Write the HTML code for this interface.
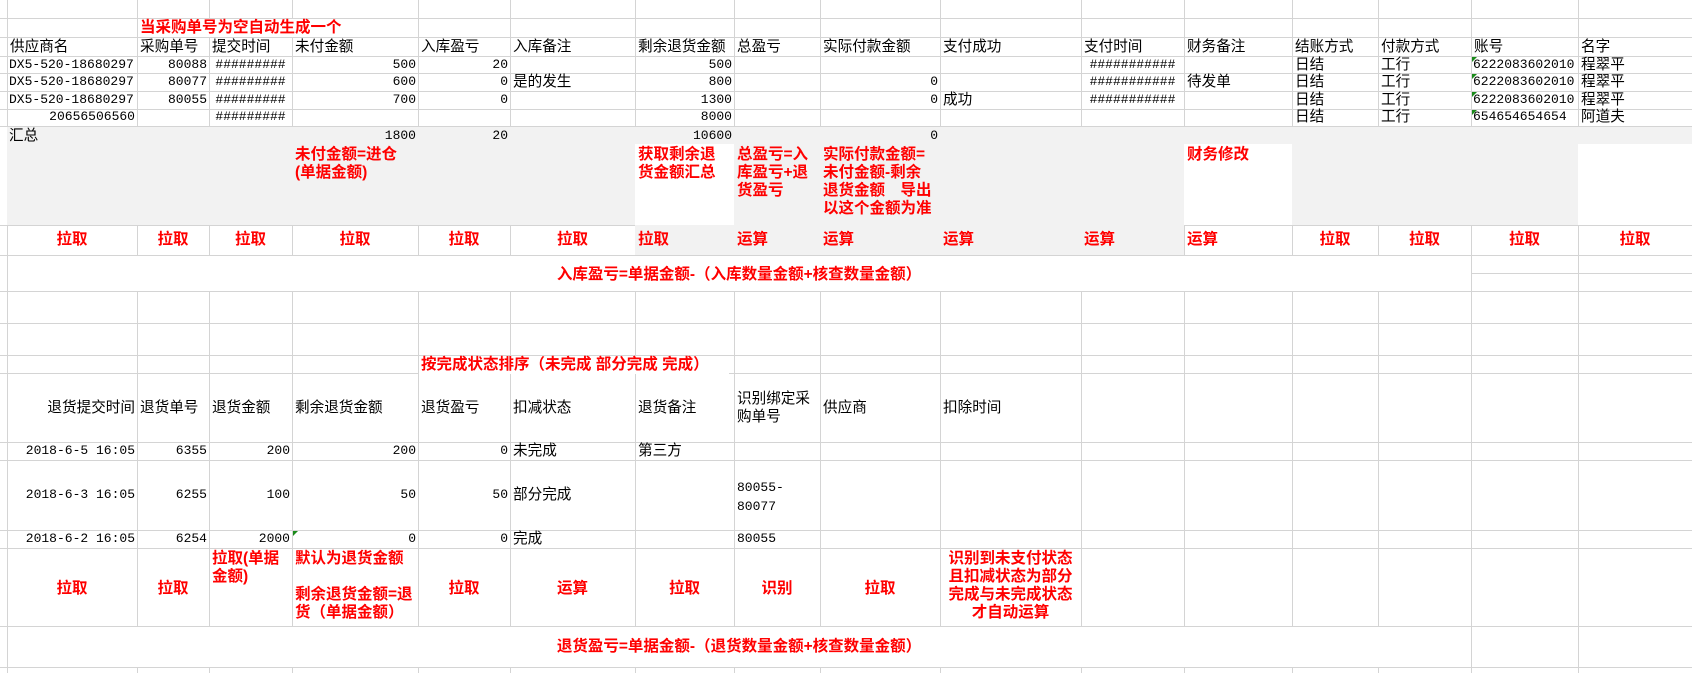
<!DOCTYPE html>
<html><head><meta charset="utf-8"><style>
body{margin:0;width:1692px;height:673px;position:relative;overflow:hidden;background:#fff;font-family:"Liberation Sans","Noto Sans CJK SC",sans-serif;color:#000}
.t{position:absolute;white-space:nowrap;font-size:14.6px;padding:0 2px;box-sizing:border-box;height:18px;line-height:18px}
.r{text-align:right}.c{text-align:center}
.m{font-family:"Liberation Mono","Noto Sans CJK SC",monospace;font-size:13px}
.red{color:#f00;font-weight:bold;font-size:15.5px;line-height:18px}
.h{position:absolute;height:1px;background:#d4d4d4}
.v{position:absolute;width:1px;background:#d4d4d4}
.g{position:absolute;background:#f2f2f2}
.w{position:absolute;background:#fff}
.tri{position:absolute;width:0;height:0;border-top:5px solid #1a8a1a;border-right:5px solid transparent}
</style></head><body>
<div class="g" style="left:7px;top:126px;width:1685px;height:99px"></div>
<div class="w" style="left:635px;top:144px;width:99px;height:81px"></div>
<div class="w" style="left:1184px;top:144px;width:108px;height:81px"></div>
<div class="w" style="left:1578px;top:144px;width:114px;height:81px"></div>
<div class="g" style="left:635px;top:225px;width:549px;height:30px"></div>

<div class="h" style="left:0;top:18px;width:1692px"></div>
<div class="h" style="left:0;top:37px;width:1692px"></div>
<div class="h" style="left:0;top:56px;width:1692px"></div>
<div class="h" style="left:0;top:73px;width:1692px"></div>
<div class="h" style="left:0;top:91px;width:1692px"></div>
<div class="h" style="left:0;top:109px;width:1692px"></div>
<div class="h" style="left:0;top:126px;width:1692px"></div>
<div class="h" style="left:0;top:225px;width:635px"></div>
<div class="h" style="left:1184px;top:225px;width:508px"></div>
<div class="h" style="left:0;top:255px;width:1692px"></div>
<div class="h" style="left:1471px;top:273px;width:221px"></div>
<div class="h" style="left:0;top:291px;width:1692px"></div>
<div class="h" style="left:0;top:323px;width:1692px"></div>
<div class="h" style="left:0;top:355px;width:1692px"></div>
<div class="h" style="left:0;top:373px;width:1692px"></div>
<div class="h" style="left:0;top:442px;width:1692px"></div>
<div class="h" style="left:0;top:460px;width:1692px"></div>
<div class="h" style="left:0;top:530px;width:1692px"></div>
<div class="h" style="left:0;top:548px;width:1692px"></div>
<div class="h" style="left:0;top:626px;width:1692px"></div>
<div class="h" style="left:0;top:667px;width:1692px"></div>

<div class="v" style="left:7px;top:0;height:126px"></div>
<div class="v" style="left:137px;top:0;height:126px"></div>
<div class="v" style="left:209px;top:0;height:126px"></div>
<div class="v" style="left:292px;top:0;height:126px"></div>
<div class="v" style="left:418px;top:0;height:126px"></div>
<div class="v" style="left:510px;top:0;height:126px"></div>
<div class="v" style="left:635px;top:0;height:126px"></div>
<div class="v" style="left:734px;top:0;height:126px"></div>
<div class="v" style="left:820px;top:0;height:126px"></div>
<div class="v" style="left:940px;top:0;height:126px"></div>
<div class="v" style="left:1081px;top:0;height:126px"></div>
<div class="v" style="left:1184px;top:0;height:126px"></div>
<div class="v" style="left:1292px;top:0;height:126px"></div>
<div class="v" style="left:1378px;top:0;height:126px"></div>
<div class="v" style="left:1471px;top:0;height:126px"></div>
<div class="v" style="left:1578px;top:0;height:126px"></div>
<div class="v" style="left:7px;top:225px;height:30px"></div>
<div class="v" style="left:137px;top:225px;height:30px"></div>
<div class="v" style="left:209px;top:225px;height:30px"></div>
<div class="v" style="left:292px;top:225px;height:30px"></div>
<div class="v" style="left:418px;top:225px;height:30px"></div>
<div class="v" style="left:510px;top:225px;height:30px"></div>
<div class="v" style="left:1184px;top:225px;height:30px"></div>
<div class="v" style="left:1292px;top:225px;height:30px"></div>
<div class="v" style="left:1378px;top:225px;height:30px"></div>
<div class="v" style="left:1471px;top:225px;height:30px"></div>
<div class="v" style="left:1578px;top:225px;height:30px"></div>
<div class="v" style="left:7px;top:255px;height:36px"></div>
<div class="v" style="left:1471px;top:255px;height:36px"></div>
<div class="v" style="left:1578px;top:255px;height:36px"></div>
<div class="v" style="left:7px;top:291px;height:335px"></div>
<div class="v" style="left:137px;top:291px;height:335px"></div>
<div class="v" style="left:209px;top:291px;height:335px"></div>
<div class="v" style="left:292px;top:291px;height:335px"></div>
<div class="v" style="left:418px;top:291px;height:335px"></div>
<div class="v" style="left:510px;top:291px;height:335px"></div>
<div class="v" style="left:635px;top:291px;height:335px"></div>
<div class="v" style="left:734px;top:291px;height:335px"></div>
<div class="v" style="left:820px;top:291px;height:335px"></div>
<div class="v" style="left:940px;top:291px;height:335px"></div>
<div class="v" style="left:1081px;top:291px;height:335px"></div>
<div class="v" style="left:1184px;top:291px;height:335px"></div>
<div class="v" style="left:1292px;top:291px;height:335px"></div>
<div class="v" style="left:1378px;top:291px;height:335px"></div>
<div class="v" style="left:1471px;top:291px;height:335px"></div>
<div class="v" style="left:1578px;top:291px;height:335px"></div>
<div class="v" style="left:7px;top:626px;height:41px"></div>
<div class="v" style="left:1471px;top:626px;height:41px"></div>
<div class="v" style="left:1578px;top:626px;height:41px"></div>
<div class="v" style="left:7px;top:667px;height:6px"></div>
<div class="v" style="left:137px;top:667px;height:6px"></div>
<div class="v" style="left:209px;top:667px;height:6px"></div>
<div class="v" style="left:292px;top:667px;height:6px"></div>
<div class="v" style="left:418px;top:667px;height:6px"></div>
<div class="v" style="left:510px;top:667px;height:6px"></div>
<div class="v" style="left:635px;top:667px;height:6px"></div>
<div class="v" style="left:734px;top:667px;height:6px"></div>
<div class="v" style="left:820px;top:667px;height:6px"></div>
<div class="v" style="left:940px;top:667px;height:6px"></div>
<div class="v" style="left:1081px;top:667px;height:6px"></div>
<div class="v" style="left:1184px;top:667px;height:6px"></div>
<div class="v" style="left:1292px;top:667px;height:6px"></div>
<div class="v" style="left:1378px;top:667px;height:6px"></div>
<div class="v" style="left:1471px;top:667px;height:6px"></div>
<div class="v" style="left:1578px;top:667px;height:6px"></div>

<div class="t red" style="left:138px;top:19px;background:#fff;width:215px">当采购单号为空自动生成一个</div>

<div class="t" style="left:8px;top:38px">供应商名</div>
<div class="t" style="left:138px;top:38px">采购单号</div>
<div class="t" style="left:210px;top:38px">提交时间</div>
<div class="t" style="left:293px;top:38px">未付金额</div>
<div class="t" style="left:419px;top:38px">入库盈亏</div>
<div class="t" style="left:511px;top:38px">入库备注</div>
<div class="t" style="left:636px;top:38px">剩余退货金额</div>
<div class="t" style="left:735px;top:38px">总盈亏</div>
<div class="t" style="left:821px;top:38px">实际付款金额</div>
<div class="t" style="left:941px;top:38px">支付成功</div>
<div class="t" style="left:1082px;top:38px">支付时间</div>
<div class="t" style="left:1185px;top:38px">财务备注</div>
<div class="t" style="left:1293px;top:38px">结账方式</div>
<div class="t" style="left:1379px;top:38px">付款方式</div>
<div class="t" style="left:1472px;top:38px">账号</div>
<div class="t" style="left:1579px;top:38px">名字</div>

<div class="t m" style="left:7px;top:56px">DX5-520-18680297</div>
<div class="t m r" style="left:137px;top:56px;width:72px">80088</div>
<div class="t m c" style="left:209px;top:56px;width:83px">#########</div>
<div class="t m r" style="left:292px;top:56px;width:126px">500</div>
<div class="t m r" style="left:418px;top:56px;width:92px">20</div>
<div class="t m r" style="left:635px;top:56px;width:99px">500</div>
<div class="t m c" style="left:1081px;top:56px;width:103px">###########</div>
<div class="t" style="left:1293px;top:56px">日结</div>
<div class="t" style="left:1379px;top:56px">工行</div>
<div class="t m" style="left:1471px;top:56px">6222083602010</div>
<div class="t" style="left:1579px;top:56px">程翠平</div>
<div class="t m" style="left:7px;top:73px">DX5-520-18680297</div>
<div class="t m r" style="left:137px;top:73px;width:72px">80077</div>
<div class="t m c" style="left:209px;top:73px;width:83px">#########</div>
<div class="t m r" style="left:292px;top:73px;width:126px">600</div>
<div class="t m r" style="left:418px;top:73px;width:92px">0</div>
<div class="t" style="left:511px;top:73px">是的发生</div>
<div class="t m r" style="left:635px;top:73px;width:99px">800</div>
<div class="t m r" style="left:820px;top:73px;width:120px">0</div>
<div class="t m c" style="left:1081px;top:73px;width:103px">###########</div>
<div class="t" style="left:1185px;top:73px">待发单</div>
<div class="t" style="left:1293px;top:73px">日结</div>
<div class="t" style="left:1379px;top:73px">工行</div>
<div class="t m" style="left:1471px;top:73px">6222083602010</div>
<div class="t" style="left:1579px;top:73px">程翠平</div>
<div class="t m" style="left:7px;top:91px">DX5-520-18680297</div>
<div class="t m r" style="left:137px;top:91px;width:72px">80055</div>
<div class="t m c" style="left:209px;top:91px;width:83px">#########</div>
<div class="t m r" style="left:292px;top:91px;width:126px">700</div>
<div class="t m r" style="left:418px;top:91px;width:92px">0</div>
<div class="t m r" style="left:635px;top:91px;width:99px">1300</div>
<div class="t m r" style="left:820px;top:91px;width:120px">0</div>
<div class="t" style="left:941px;top:91px">成功</div>
<div class="t m c" style="left:1081px;top:91px;width:103px">###########</div>
<div class="t" style="left:1293px;top:91px">日结</div>
<div class="t" style="left:1379px;top:91px">工行</div>
<div class="t m" style="left:1471px;top:91px">6222083602010</div>
<div class="t" style="left:1579px;top:91px">程翠平</div>
<div class="t m r" style="left:7px;top:108px;width:130px">20656506560</div>
<div class="t m c" style="left:209px;top:108px;width:83px">#########</div>
<div class="t m r" style="left:635px;top:108px;width:99px">8000</div>
<div class="t" style="left:1293px;top:108px">日结</div>
<div class="t" style="left:1379px;top:108px">工行</div>
<div class="t m" style="left:1471px;top:108px">654654654654</div>
<div class="t" style="left:1579px;top:108px">阿道夫</div>
<div class="tri" style="left:1472px;top:57px"></div>
<div class="tri" style="left:1472px;top:74px"></div>
<div class="tri" style="left:1472px;top:92px"></div>
<div class="tri" style="left:1472px;top:110px"></div>

<div class="t" style="left:7px;top:127px">汇总</div>
<div class="t m r" style="left:292px;top:127px;width:126px">1800</div>
<div class="t m r" style="left:418px;top:127px;width:92px">20</div>
<div class="t m r" style="left:635px;top:127px;width:99px">10600</div>
<div class="t m r" style="left:820px;top:127px;width:120px">0</div>

<div class="t red" style="left:293px;top:146px;height:auto">未付金额=进仓<br>(单据金额)</div>
<div class="t red" style="left:636px;top:146px;height:auto">获取剩余退<br>货金额汇总</div>
<div class="t red" style="left:735px;top:146px;height:auto">总盈亏=入<br>库盈亏+退<br>货盈亏</div>
<div class="t red" style="left:821px;top:146px;height:auto">实际付款金额=<br>未付金额-剩余<br>退货金额　导出<br>以这个金额为准</div>
<div class="t red" style="left:1185px;top:146px">财务修改</div>

<div class="t red c" style="left:7px;top:231px;width:130px">拉取</div>
<div class="t red c" style="left:137px;top:231px;width:72px">拉取</div>
<div class="t red c" style="left:209px;top:231px;width:83px">拉取</div>
<div class="t red c" style="left:292px;top:231px;width:126px">拉取</div>
<div class="t red c" style="left:418px;top:231px;width:92px">拉取</div>
<div class="t red c" style="left:510px;top:231px;width:125px">拉取</div>
<div class="t red" style="left:636px;top:231px">拉取</div>
<div class="t red" style="left:735px;top:231px">运算</div>
<div class="t red" style="left:821px;top:231px">运算</div>
<div class="t red" style="left:941px;top:231px">运算</div>
<div class="t red" style="left:1082px;top:231px">运算</div>
<div class="t red" style="left:1185px;top:231px">运算</div>
<div class="t red c" style="left:1292px;top:231px;width:86px">拉取</div>
<div class="t red c" style="left:1378px;top:231px;width:93px">拉取</div>
<div class="t red c" style="left:1471px;top:231px;width:107px">拉取</div>
<div class="t red c" style="left:1578px;top:231px;width:114px">拉取</div>

<div class="t red c" style="left:7px;top:266px;width:1464px">入库盈亏=单据金额-（入库数量金额+核查数量金额）</div>

<div class="t red" style="left:419px;top:356px;background:#fff;width:310px">按完成状态排序（未完成 部分完成 完成）</div>

<div class="t r" style="left:7px;top:399px;width:130px">退货提交时间</div>
<div class="t" style="left:138px;top:399px">退货单号</div>
<div class="t" style="left:210px;top:399px">退货金额</div>
<div class="t" style="left:293px;top:399px">剩余退货金额</div>
<div class="t" style="left:419px;top:399px">退货盈亏</div>
<div class="t" style="left:511px;top:399px">扣减状态</div>
<div class="t" style="left:636px;top:399px">退货备注</div>
<div class="t" style="left:735px;top:390px;height:auto;line-height:18px">识别绑定采<br>购单号</div>
<div class="t" style="left:821px;top:399px">供应商</div>
<div class="t" style="left:941px;top:399px">扣除时间</div>

<div class="t m r" style="left:7px;top:442px;width:130px">2018-6-5 16:05</div>
<div class="t m r" style="left:137px;top:442px;width:72px">6355</div>
<div class="t m r" style="left:209px;top:442px;width:83px">200</div>
<div class="t m r" style="left:292px;top:442px;width:126px">200</div>
<div class="t m r" style="left:418px;top:442px;width:92px">0</div>
<div class="t" style="left:511px;top:442px">未完成</div>
<div class="t" style="left:636px;top:442px">第三方</div>

<div class="t m r" style="left:7px;top:486px;width:130px">2018-6-3 16:05</div>
<div class="t m r" style="left:137px;top:486px;width:72px">6255</div>
<div class="t m r" style="left:209px;top:486px;width:83px">100</div>
<div class="t m r" style="left:292px;top:486px;width:126px">50</div>
<div class="t m r" style="left:418px;top:486px;width:92px">50</div>
<div class="t" style="left:511px;top:486px">部分完成</div>
<div class="t m" style="left:735px;top:478px;height:auto;line-height:19px">80055-<br>80077</div>

<div class="t m r" style="left:7px;top:530px;width:130px">2018-6-2 16:05</div>
<div class="t m r" style="left:137px;top:530px;width:72px">6254</div>
<div class="t m r" style="left:209px;top:530px;width:83px">2000</div>
<div class="t m r" style="left:292px;top:530px;width:126px">0</div>
<div class="t m r" style="left:418px;top:530px;width:92px">0</div>
<div class="t" style="left:511px;top:530px">完成</div>
<div class="t m" style="left:735px;top:530px">80055</div>
<div class="tri" style="left:293px;top:531px"></div>

<div class="t red c" style="left:7px;top:580px;width:130px">拉取</div>
<div class="t red c" style="left:137px;top:580px;width:72px">拉取</div>
<div class="t red" style="left:210px;top:550px;height:auto">拉取(单据<br>金额)</div>
<div class="t red" style="left:293px;top:550px;height:auto">默认为退货金额<br><br>剩余退货金额=退<br>货（单据金额）</div>
<div class="t red c" style="left:418px;top:580px;width:92px">拉取</div>
<div class="t red c" style="left:510px;top:580px;width:125px">运算</div>
<div class="t red c" style="left:635px;top:580px;width:99px">拉取</div>
<div class="t red c" style="left:734px;top:580px;width:86px">识别</div>
<div class="t red c" style="left:820px;top:580px;width:120px">拉取</div>
<div class="t red c" style="left:940px;top:550px;width:141px;height:auto">识别到未支付状态<br>且扣减状态为部分<br>完成与未完成状态<br>才自动运算</div>

<div class="t red c" style="left:7px;top:638px;width:1464px">退货盈亏=单据金额-（退货数量金额+核查数量金额）</div>
</body></html>
